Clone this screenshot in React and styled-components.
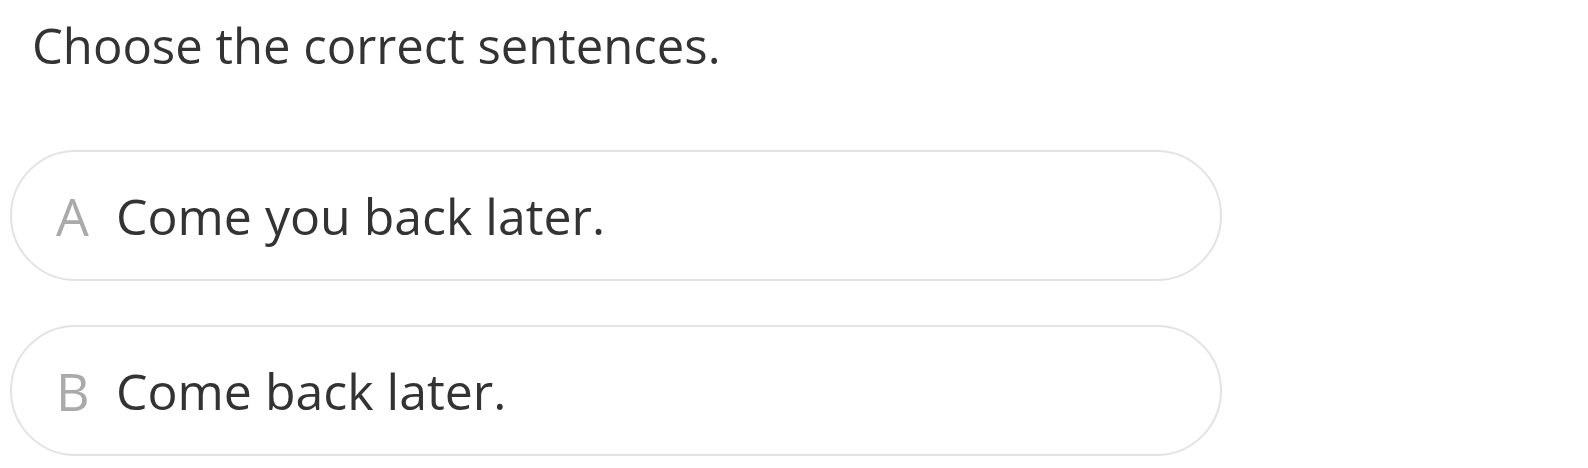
import React from "react"
import styled, { createGlobalStyle } from "styled-components"

const GlobalStyle = createGlobalStyle`
    body {
        margin: 0;
        background: #ffffff;
        font-family: "Open Sans", "Noto Sans", sans-serif;
    }
`

const Page = styled.div`
    padding: 5px 10px 0 10px;
    width: 1212px;
`

const Title = styled.h1`
    margin: 0 0 0 22px;
    font-size: 49px;
    font-weight: 400;
    line-height: 80px;
    color: #333333;
`

const Options = styled.div`
    display: flex;
    flex-direction: column;
    gap: 44px;
    margin-top: 65px;
`

const Option = styled.div`
    display: flex;
    align-items: center;
    box-sizing: border-box;
    height: 131px;
    padding-left: 44px;
    border: 2px solid #e3e3e3;
    border-radius: 66px;
    background: #ffffff;
`

const Letter = styled.span`
    width: 60px;
    font-size: 52px;
    color: #aaaaaa;
`

const Sentence = styled.span`
    font-size: 50px;
    color: #333333;
`

const options = [
    { letter: "A", text: "Come you back later." },
    { letter: "B", text: "Come back later." },
]

function App() {
    return (
        <Page>
            <GlobalStyle />
            <Title>Choose the correct sentences.</Title>
            <Options>
                {options.map(option => (
                    <Option key={option.letter}>
                        <Letter>{option.letter}</Letter>
                        <Sentence>{option.text}</Sentence>
                    </Option>
                ))}
            </Options>
        </Page>
    )
}

export default App
